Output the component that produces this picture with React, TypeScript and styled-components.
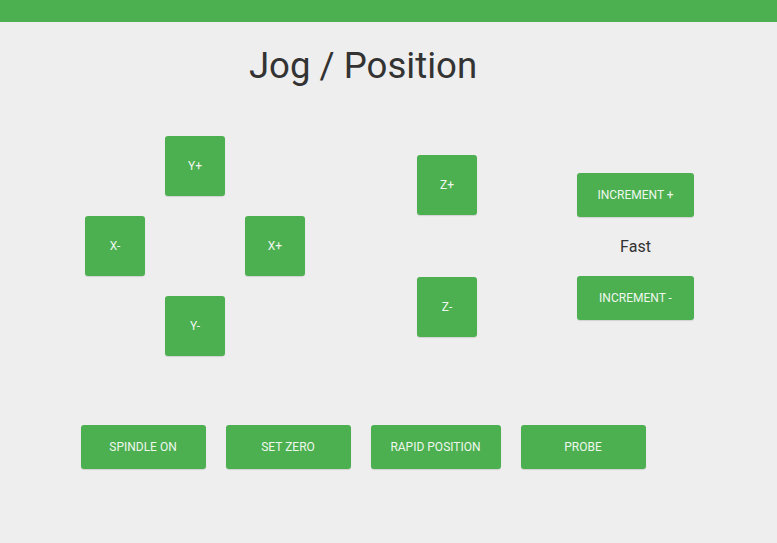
import React from "react";
import styled, { createGlobalStyle } from "styled-components";

const Global = createGlobalStyle`
  html, body { margin: 0; padding: 0; background: #eeeeee; }
  body { font-family: Roboto, "Liberation Sans", Arial, sans-serif; color: #333333; }
  #root { min-height: 543px; }
`;

const TopBar = styled.header`
  height: 22px;
  background: #4caf50;
`;

const Main = styled.main`
  width: 726px;
  display: flex;
  flex-direction: column;
  align-items: stretch;
`;

const Title = styled.h1`
  margin: 23px 0 0;
  font-size: 36.6px;
  line-height: 42px;
  font-weight: 400;
  text-align: center;
  color: #333333;
`;

const Controls = styled.section`
  display: flex;
  align-items: center;
  margin-top: 49px;
  padding-left: 85px;
  height: 220px;
`;

const JogGrid = styled.div`
  display: grid;
  grid-template-columns: repeat(3, 60px);
  grid-template-rows: repeat(3, 60px);
  gap: 20px;
`;

const ZColumn = styled.div`
  display: flex;
  flex-direction: column;
  gap: 62px;
  margin-left: 112px;
`;

const IncColumn = styled.div`
  display: flex;
  flex-direction: column;
  align-items: center;
  margin-left: 100px;
  width: 117px;
`;

const Speed = styled.div`
  font-size: 16px;
  line-height: 59px;
  height: 59px;
  color: #333333;
`;

const Btn = styled.button<{ $w?: number; $h?: number; $col?: number; $row?: number }>`
  width: ${(p) => p.$w ?? 60}px;
  height: ${(p) => p.$h ?? 60}px;
  ${(p) => (p.$col ? `grid-column: ${p.$col};` : "")}
  ${(p) => (p.$row ? `grid-row: ${p.$row};` : "")}
  display: flex;
  align-items: center;
  justify-content: center;
  padding: 0;
  border: none;
  border-radius: 3px;
  background: #4caf50;
  color: #eef7ee;
  font-family: Roboto, "Liberation Sans", Arial, sans-serif;
  font-size: 12px;
  font-weight: 400;
  text-transform: uppercase;
  box-shadow: 0 1px 1px rgba(0, 0, 0, 0.12);
  cursor: pointer;
`;

const Actions = styled.section`
  display: flex;
  justify-content: center;
  gap: 20px;
  margin-top: 69px;
`;

export default function App() {
  return (
    <>
      <Global />
      <TopBar />
      <Main>
        <Title>Jog / Position</Title>
        <Controls>
          <JogGrid>
            <Btn $col={2} $row={1}>Y+</Btn>
            <Btn $col={1} $row={2}>X-</Btn>
            <Btn $col={3} $row={2}>X+</Btn>
            <Btn $col={2} $row={3}>Y-</Btn>
          </JogGrid>
          <ZColumn>
            <Btn>Z+</Btn>
            <Btn>Z-</Btn>
          </ZColumn>
          <IncColumn>
            <Btn $w={117} $h={44}>Increment +</Btn>
            <Speed>Fast</Speed>
            <Btn $w={117} $h={44}>Increment -</Btn>
          </IncColumn>
        </Controls>
        <Actions>
          <Btn $w={125} $h={44}>Spindle On</Btn>
          <Btn $w={125} $h={44}>Set Zero</Btn>
          <Btn $w={130} $h={44}>Rapid Position</Btn>
          <Btn $w={125} $h={44}>Probe</Btn>
        </Actions>
      </Main>
    </>
  );
}
